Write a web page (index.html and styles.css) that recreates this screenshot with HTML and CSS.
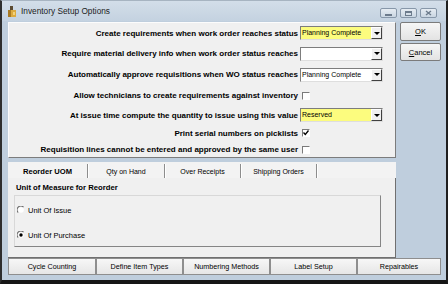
FILE: index.html
```html
<!DOCTYPE html>
<html>
<head>
<meta charset="utf-8">
<link rel="stylesheet" href="styles.css">
</head>
<body>
<div class="window">
  <div class="titlebar">
    <svg class="appicon" width="8" height="11" viewBox="0 0 8 11"><path d="M2 0h3v4H2z" fill="#5b4b33"/><path d="M0 4h8v7H0z" fill="#dcaa3e"/><path d="M0 4h3v7H0z" fill="#a97a22"/><path d="M5 6h2v3H5z" fill="#f3d27a"/></svg>
    <span class="title">Inventory Setup Options</span>
    <div class="caption-btns">
      <span class="cbtn"><span class="g-min"></span></span>
      <span class="cbtn"><span class="g-max"></span></span>
      <span class="cbtn"><svg width="7" height="6" viewBox="0 0 7 6"><path d="M1 1l5 4M6 1L1 5" stroke="#6c7b8c" stroke-width="1.4"/></svg></span>
    </div>
  </div>
  <div class="body">
    <div class="upper">
      <div class="options">
        <div class="lbl">Create requirements when work order reaches status</div>
        <div class="ctl"><div class="combo yellow"><span class="val">Planning Complete</span><span class="arrow"></span></div></div>

        <div class="lbl">Require material delivery info when work order status reaches</div>
        <div class="ctl"><div class="combo"><span class="val"></span><span class="arrow"></span></div></div>

        <div class="lbl">Automatically approve requisitions when WO status reaches</div>
        <div class="ctl"><div class="combo"><span class="val">Planning Complete</span><span class="arrow"></span></div></div>

        <div class="lbl">Allow technicians to create requirements against inventory</div>
        <div class="ctl"><span class="check"></span></div>

        <div class="lbl">At issue time compute the quantity to issue using this value</div>
        <div class="ctl"><div class="combo yellow"><span class="val">Reserved</span><span class="arrow"></span></div></div>

        <div class="lbl">Print serial numbers on picklists</div>
        <div class="ctl"><span class="check"><svg width="6" height="6" viewBox="0 0 6 6"><path d="M0.5 2.5l1.8 2L5.5 0.5" stroke="#000" stroke-width="1.3" fill="none"/></svg></span></div>

        <div class="lbl">Requisition lines cannot be entered and approved by the same user</div>
        <div class="ctl"><span class="check"></span></div>
      </div>
      <div class="side">
        <button class="btn"><u>O</u>K</button>
        <button class="btn"><u>C</u>ancel</button>
      </div>
    </div>
    <div class="tabstrip">
      <span class="tab active">Reorder UOM</span>
      <span class="tab t2">Qty on Hand</span>
      <span class="tab t3">Over Receipts</span>
      <span class="tab t4">Shipping Orders</span>
    </div>
    <div class="tabpanel">
      <div class="gtitle">Unit of Measure for Reorder</div>
      <div class="group">
        <div class="radio-row">
          <svg class="radio" width="8" height="8" viewBox="0 0 8 8"><path d="M6.5 1.2A3.6 3.6 0 0 0 1.2 6.5" stroke="#6a6a6a" stroke-width="1.1" fill="none"/><circle cx="4" cy="4" r="2.8" fill="#fff"/></svg>
          <span>Unit Of Issue</span>
        </div>
        <div class="radio-row r2">
          <svg class="radio" width="8" height="8" viewBox="0 0 8 8"><path d="M6.5 1.2A3.6 3.6 0 0 0 1.2 6.5" stroke="#6a6a6a" stroke-width="1.1" fill="none"/><circle cx="4" cy="4" r="2.8" fill="#fff"/><circle cx="4" cy="4" r="1.7" fill="#000"/></svg>
          <span>Unit Of Purchase</span>
        </div>
      </div>
    </div>
    <div class="bottom">
      <button class="bbtn w1">Cycle Counting</button>
      <button class="bbtn w2">Define Item Types</button>
      <button class="bbtn w2">Numbering Methods</button>
      <button class="bbtn w2">Label Setup</button>
      <button class="bbtn w3">Repairables</button>
    </div>
  </div>
</div>
</body>
</html>
```

FILE: styles.css
```css
* { box-sizing: border-box; }
html, body { margin: 0; padding: 0; }
body {
  width: 448px;
  height: 284px;
  overflow: hidden;
  background: #1b1b1b;
  font-family: "Liberation Sans", Arial, sans-serif;
  color: #000;
}
.window {
  width: 448px;
  height: 284px;
  display: flex;
  flex-direction: column;
  background: #bfcedd;
  border-top: 1px solid #a7b4c1;
  border-left: 2px solid #2e2e2e;
  border-right: 2px solid #1f1f1f;
  border-bottom: 4px solid #161616;
}
.titlebar {
  height: 20px;
  flex: none;
  display: flex;
  align-items: center;
  padding-left: 6px;
  background: linear-gradient(#d3dee9, #c4d2e0);
}
.appicon { flex: none; margin-top: 1px; }
.title {
  margin-left: 5px;
  font-size: 8.3px;
  color: #1c1c1c;
}
.caption-btns {
  margin-left: auto;
  align-self: flex-start;
  margin-top: 7px;
  margin-right: 9px;
  display: flex;
  gap: 3px;
}
.cbtn {
  width: 17px;
  height: 10px;
  border: 1px solid #8797a9;
  border-radius: 2px;
  background: linear-gradient(#e6ecf2, #cad6e2);
  display: flex;
  align-items: center;
  justify-content: center;
}
.g-min { width: 7px; height: 2px; background: #6c7b8c; margin-top: 3px; }
.g-max { width: 7px; height: 5px; border: 1px solid #6c7b8c; border-top-width: 2px; }

.body {
  flex: 1;
  display: flex;
  flex-direction: column;
  padding: 1px 5px 0 6px;
}
.upper {
  display: flex;
  height: 136px;
  flex: none;
}
.options {
  width: 388px;
  height: 136px;
  background: #f0f0f0;
  border-top: 1px solid #fcfcfc;
  border-left: 1px solid #fcfcfc;
  border-right: 1px solid #7c7c7c;
  border-bottom: 1px solid #7c7c7c;
  display: grid;
  grid-template-columns: 289px 1fr;
  grid-template-rows: 20px 21px 21px 21px 18px 18px 15px;
  column-gap: 2px;
}
.lbl {
  font-size: 8px;
  font-weight: bold;
  text-align: right;
  white-space: nowrap;
  display: flex;
  align-items: center;
  justify-content: flex-end;
}
.ctl {
  display: flex;
  align-items: center;
}
.combo {
  width: 83px;
  height: 14px;
  display: flex;
  background: #fff;
  border: 1px solid;
  border-color: #7d7d7d #dedede #dedede #7d7d7d;
}
.combo.yellow { background: #fcfc7e; }
.val {
  flex: 1;
  font-size: 7px;
  line-height: 12px;
  padding-left: 1px;
  white-space: nowrap;
  overflow: hidden;
}
.arrow {
  width: 11px;
  height: 12px;
  background: #f0f0f0;
  border-top: 1px solid #fff;
  border-left: 1px solid #fff;
  border-right: 1px solid #404040;
  border-bottom: 1px solid #404040;
  display: flex;
  align-items: center;
  justify-content: center;
}
.arrow::before {
  content: "";
  width: 0;
  height: 0;
  border-top: 3px solid #000;
  border-left: 3px solid transparent;
  border-right: 3px solid transparent;
}
.check {
  width: 8px;
  height: 8px;
  margin-left: 2px;
  background: #fff;
  border: 1px solid;
  border-color: #7a7a7a #ffffff #ffffff #7a7a7a;
  display: flex;
  align-items: center;
  justify-content: center;
}
.side {
  margin-left: 4px;
  width: 41px;
  display: flex;
  flex-direction: column;
  gap: 2px;
}
.btn {
  font-family: "Liberation Sans", Arial, sans-serif;
  font-size: 7.5px;
  color: #000;
  padding: 0;
  border: 1px solid #7b7b7b;
  border-radius: 2px;
  background: linear-gradient(#f6f6f6, #e3e3e3);
}
.btn:first-child { height: 19px; }
.btn:last-child { height: 18px; }

.tabstrip {
  margin-top: 4px;
  height: 16px;
  width: 388px;
  flex: none;
  display: flex;
  align-items: flex-end;
  background: #f3f3f3;
}
.tab {
  height: 14px;
  display: flex;
  align-items: center;
  justify-content: center;
  font-size: 7px;
  border-right: 1px solid #8d8d8d;
  box-shadow: 1px 0 0 #ffffff;
}
.tab.active { width: 80px; font-weight: bold; font-size: 7.6px; }
.t2 { width: 77px; }
.t3 { width: 76px; }
.t4 { width: 76px; }

.tabpanel {
  width: 388px;
  height: 80px;
  flex: none;
  background: #f0f0f0;
  border-right: 1px solid #707070;
  border-bottom: 1px solid #707070;
  padding-top: 5px;
}
.gtitle {
  font-size: 7.7px;
  font-weight: bold;
  line-height: 10px;
  padding-left: 8px;
}
.group {
  margin: 2px 0 0 6px;
  width: 367px;
  height: 52px;
  border-top: 1px solid #d8d8d8;
  border-left: 1px solid #d8d8d8;
  border-right: 1px solid #858585;
  border-bottom: 1px solid #858585;
  padding: 8px 0 0 2px;
}
.radio-row {
  height: 12px;
  display: flex;
  align-items: center;
  gap: 3px;
  font-size: 7.5px;
}
.radio-row.r2 { margin-top: 13px; }
.radio { flex: none; }

.bottom {
  display: flex;
  height: 17px;
  flex: none;
}
.bbtn {
  height: 17px;
  padding: 0;
  font-family: "Liberation Sans", Arial, sans-serif;
  font-size: 7.2px;
  color: #000;
  border: 1px solid #8e8e8e;
  background: linear-gradient(#f7f7f7, #e6e6e6);
}
.w1 { width: 88px; }
.w2 { width: 87px; }
.w3 { width: 84px; }
```
